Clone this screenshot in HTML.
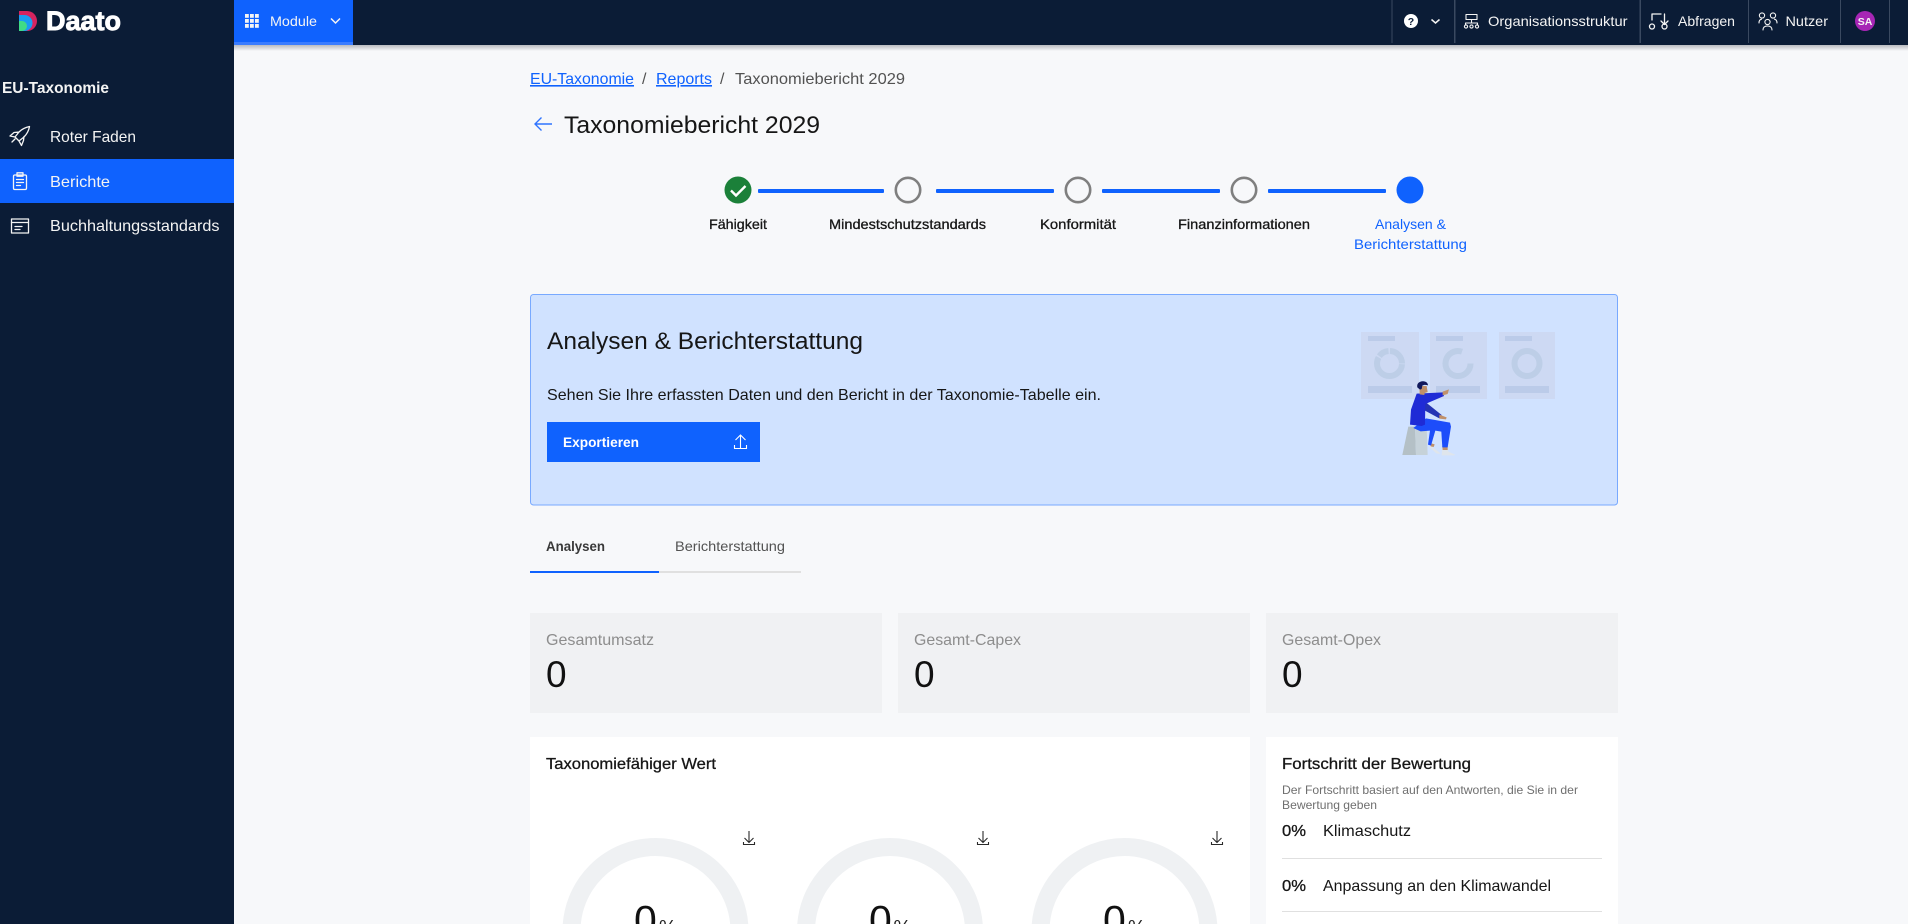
<!DOCTYPE html>
<html lang="de"><head><meta charset="utf-8"><title>Taxonomiebericht 2029</title>
<style>
html,body{margin:0;padding:0;width:1908px;height:924px;overflow:hidden;background:#f7f8fa}
svg{display:block}
text{font-family:"Liberation Sans",sans-serif;font-size:16px;fill:#161616}
.w{fill:#f4f4f4}.b{font-weight:700}.m{stroke:#161616;stroke-width:.3px}
.ic{fill:none;stroke:#f4f4f4;stroke-width:1.3;stroke-linecap:round;stroke-linejoin:round}
</style></head><body>
<svg width="1908" height="924" viewBox="0 0 1908 924" xmlns="http://www.w3.org/2000/svg">
<defs><linearGradient id="sh" x1="0" y1="0" x2="0" y2="1"><stop offset="0" stop-color="#b9bbc0"/><stop offset="1" stop-color="#f7f8fa"/></linearGradient></defs>
<rect width="1908" height="924" fill="#f7f8fa"/>
<rect x="234" y="45" width="1674" height="6" fill="url(#sh)"/>
<rect width="1908" height="45" fill="#0b1c36"/>
<rect y="45" width="234" height="879" fill="#0b1c36"/>

<!-- logo -->
<path d="M19 11H27A10 10 0 0 1 27 31H19Z" fill="#d6245f"/>
<path d="M19 15H24.500A8 8 0 0 1 32.500 23A8 8 0 0 1 24.500 31H19Z" fill="#1a9df0"/>
<path d="M19 21H22A5 5 0 0 1 27 26A5 5 0 0 1 22 31H19Z" fill="#3fdc86"/>
<text x="46" y="30" class="b" style="font-size:27px;fill:#fff;stroke:#fff;stroke-width:.9" textLength="75" lengthAdjust="spacing">Daato</text>

<!-- module -->
<rect x="234" y="0" width="119" height="45" fill="#0f62fe"/>
<rect x="234" y="42" width="119" height="3" fill="#3a7cff"/>
<g fill="#f4f4f4"><rect x="245" y="14" width="3.800" height="3.800"/><rect x="250" y="14" width="3.800" height="3.800"/><rect x="255" y="14" width="3.800" height="3.800"/><rect x="245" y="19" width="3.800" height="3.800"/><rect x="250" y="19" width="3.800" height="3.800"/><rect x="255" y="19" width="3.800" height="3.800"/><rect x="245" y="24" width="3.800" height="3.800"/><rect x="250" y="24" width="3.800" height="3.800"/><rect x="255" y="24" width="3.800" height="3.800"/></g>
<text x="270" y="26" class="w" style="font-size:14px" textLength="47" lengthAdjust="spacingAndGlyphs">Module</text>
<path d="M331 18.500l4.500 4.500 4.500-4.500" fill="none" stroke="#f4f4f4" stroke-width="1.500"/>

<!-- top right -->
<g fill="#3a4960"><rect x="1391.500" y="0" width="1" height="43"/><rect x="1454" y="0" width="1.500" height="43"/><rect x="1639.500" y="0" width="1.500" height="43"/><rect x="1748" y="0" width="1" height="43"/><rect x="1840" y="0" width="1" height="43"/><rect x="1889" y="0" width="1" height="43"/></g>
<circle cx="1411" cy="21" r="7" fill="#fff"/>
<text x="1411" y="25" text-anchor="middle" class="b" style="font-size:10.500px;fill:#0b1c36">?</text>
<path d="M1431.500 19.500l4 3.500 4-3.500" fill="none" stroke="#f4f4f4" stroke-width="1.500"/>
<g class="ic" style="stroke-width:1.100"><rect x="1466" y="14.500" width="11" height="5"/><path d="M1471.500 19.500V23M1465.500 25V23H1477.500V25"/><circle cx="1466" cy="26.500" r="1.600"/><circle cx="1471.500" cy="26.500" r="1.600"/><circle cx="1477" cy="26.500" r="1.600"/></g>
<text x="1488" y="26" class="w" style="font-size:14px" textLength="139.500" lengthAdjust="spacingAndGlyphs">Organisationsstruktur</text>
<g class="ic"><path d="M1652 20V14H1661M1664.500 14V24M1661 21l3.500 3.500 3.500-3.500"/><circle cx="1652" cy="26.500" r="2.500"/><circle cx="1664.500" cy="26.500" r="2.500"/></g>
<text x="1678" y="26" class="w" style="font-size:14px" textLength="57" lengthAdjust="spacingAndGlyphs">Abfragen</text>
<g class="ic" style="stroke-width:1.100"><circle cx="1762" cy="15.500" r="2.600"/><circle cx="1773" cy="15.500" r="2.600"/><circle cx="1767.500" cy="22" r="2.600"/><path d="M1759 23c0-2.500 1-3.500 2.500-3.800M1777 23c0-2.500-1-3.500-2.500-3.800M1763 30c0-2.800 2-4 4.500-4s4.500 1.200 4.500 4"/></g>
<text x="1785.500" y="26" class="w" style="font-size:14px" textLength="42.500" lengthAdjust="spacingAndGlyphs">Nutzer</text>
<circle cx="1865" cy="21" r="10" fill="#a626b5"/>
<text x="1865" y="25" text-anchor="middle" class="b" style="font-size:10.500px;fill:#f4f4f4">SA</text>

<!-- sidebar -->
<text x="2" y="93" class="b w" textLength="107" lengthAdjust="spacingAndGlyphs">EU-Taxonomie</text>
<rect x="0" y="159" width="234" height="44" fill="#0f62fe"/>
<g class="ic"><path d="M15 137l4-5c3-3 6-4.500 10.500-5.500-.8 4.500-2.500 7.500-5.500 10.500l-5 4zM15 137l-5-1 4-3.500 5-.5M19 141l2.500 4.500 2-5 .5-4M12 142l3-3"/></g>
<g class="ic"><rect x="13.500" y="175" width="13" height="14.500" rx="1.200"/><rect x="17" y="172.800" width="6" height="3.400"/><path d="M16.500 179.500h7M16.500 182.500h7M16.500 185.500h4"/></g>
<g class="ic"><rect x="11.500" y="219" width="17" height="14"/><path d="M11.500 222.500h17M15 226.500h7M15 229.500h5"/></g>
<text x="50" y="142" class="w" textLength="86" lengthAdjust="spacingAndGlyphs">Roter Faden</text>
<text x="50" y="187" class="w" textLength="60" lengthAdjust="spacingAndGlyphs">Berichte</text>
<text x="50" y="231" class="w" textLength="169.500" lengthAdjust="spacingAndGlyphs">Buchhaltungsstandards</text>

<!-- breadcrumb -->
<text x="530" y="84" style="fill:#0f62fe" text-decoration="underline" textLength="104" lengthAdjust="spacingAndGlyphs">EU-Taxonomie</text>
<text x="642" y="84" style="fill:#525252">/</text>
<text x="656" y="84" style="fill:#0f62fe" text-decoration="underline" textLength="56" lengthAdjust="spacingAndGlyphs">Reports</text>
<text x="720" y="84" style="fill:#525252">/</text>
<text x="735" y="84" style="fill:#525252" textLength="170" lengthAdjust="spacingAndGlyphs">Taxonomiebericht 2029</text>

<path d="M552 124H535M541.500 117.500l-6.500 6.500 6.500 6.500" fill="none" stroke="#2f74fe" stroke-width="1.400"/>
<text x="564" y="133" style="font-size:24px" textLength="256" lengthAdjust="spacingAndGlyphs">Taxonomiebericht 2029</text>

<!-- stepper -->
<g fill="#0f62fe"><rect x="758" y="189" width="126" height="4" rx="1"/><rect x="936" y="189" width="118" height="4" rx="1"/><rect x="1102" y="189" width="118" height="4" rx="1"/><rect x="1268" y="189" width="118" height="4" rx="1"/></g>
<circle cx="738" cy="190" r="13.500" fill="#1b8039"/>
<path d="M731 190.500l5 5 9.500-9.500" fill="none" stroke="#fff" stroke-width="2.400"/>
<g fill="none" stroke="#7f7f7f" stroke-width="2.600"><circle cx="908" cy="190" r="12.200"/><circle cx="1078" cy="190" r="12.200"/><circle cx="1244" cy="190" r="12.200"/></g>
<circle cx="1410" cy="190" r="13.500" fill="#0f62fe"/>
<text x="709" y="229" class="m" style="font-size:14px" textLength="58" lengthAdjust="spacingAndGlyphs">Fähigkeit</text>
<text x="829" y="229" class="m" style="font-size:14px" textLength="157" lengthAdjust="spacingAndGlyphs">Mindestschutzstandards</text>
<text x="1040" y="229" class="m" style="font-size:14px" textLength="76" lengthAdjust="spacingAndGlyphs">Konformität</text>
<text x="1178" y="229" class="m" style="font-size:14px" textLength="132" lengthAdjust="spacingAndGlyphs">Finanzinformationen</text>
<text x="1375" y="229" style="font-size:14px;fill:#0f62fe" textLength="71" lengthAdjust="spacingAndGlyphs">Analysen &amp;</text>
<text x="1354" y="249" style="font-size:14px;fill:#0f62fe" textLength="113" lengthAdjust="spacingAndGlyphs">Berichterstattung</text>

<!-- banner -->
<rect x="530.500" y="294.500" width="1087" height="210.500" rx="3" fill="#d0e2ff" stroke="#78a9ff"/>
<text x="547" y="349" style="font-size:24px" textLength="316" lengthAdjust="spacingAndGlyphs">Analysen &amp; Berichterstattung</text>
<text x="547" y="400" textLength="554" lengthAdjust="spacingAndGlyphs">Sehen Sie Ihre erfassten Daten und den Bericht in der Taxonomie-Tabelle ein.</text>
<rect x="547" y="422" width="213" height="40" fill="#0f62fe"/>
<text x="563" y="447" class="b" style="font-size:14px;fill:#fff" textLength="76" lengthAdjust="spacingAndGlyphs">Exportieren</text>
<path d="M740.500 448V435M735.500 440l5-5 5 5M734.500 445v3.500h12v-3.500" fill="none" stroke="#fff" stroke-width="1.100"/>

<!-- illustration -->
<g fill="#cdd9f3"><rect x="1361" y="332" width="58" height="67"/><rect x="1430" y="332" width="57" height="67"/><rect x="1499" y="332" width="56" height="67"/></g>
<g fill="#bbcbe9"><rect x="1368" y="336" width="27" height="5"/><rect x="1368" y="386" width="44" height="7"/><rect x="1436" y="336" width="27" height="5"/><rect x="1436" y="386" width="44" height="7"/><rect x="1505" y="336" width="27" height="5"/><rect x="1505" y="386" width="44" height="7"/></g>
<g fill="none" stroke="#bdcee7" stroke-width="6"><circle cx="1389.500" cy="363.500" r="12.500" stroke-dasharray="0 .7 44.600 1.500 10.700 1.500 19.500"/><path d="M1470.500 363.500A12.500 12.500 0 1 1 1462 351.700"/><circle cx="1527" cy="363.500" r="12.500"/></g>
<g transform="translate(1320 310) scale(.3333)">
<path d="M265 350H285L288 435H247Z" fill="#b4c0c6"/><path d="M285 350H320L323 435H288Z" fill="#c6d2d9"/>
<path d="M330 405l28 22 3 5-12-2-22-20zM367 412h16l2 13 20 9-2 2h-38z" fill="#dfe5ec"/>
<path d="M334 400l10 3-3 8-9-2zM367 408h16v12h-15z" fill="#c0906a"/>
<path d="M315 275L365 315 358 325 315 302Z" fill="#2433b4"/>
<path d="M358 314l22 8-2 6-20-2z" fill="#c0906a"/>
<path d="M318 325l72 13 3 12-10 62h-16l-3-47-18-3-13 45-9-3 6-42-28 2-22-10z" fill="#1d4dfa"/>
<path d="M290 251l80-4 2 11-56 24-1 62-10 4-35-4 3-45z" fill="#1f2bd6"/>
<path d="M368 245l19-7-2 7-2 7-15 4z" fill="#c0906a"/>
<path d="M298 228h22l3 18-9 3-1 6-14-2z" fill="#c0906a"/>
<path d="M292 232c-3-14 10-19 20-18 8 1 12 6 12 12-7-2-13-2-17 1l-2 10-5 2z" fill="#11195c"/>
</g>

<!-- tabs -->
<text x="546" y="551" class="b" style="font-size:14px;fill:#393939" textLength="59" lengthAdjust="spacingAndGlyphs">Analysen</text>
<text x="675" y="551" style="font-size:14px;fill:#525252" textLength="110" lengthAdjust="spacingAndGlyphs">Berichterstattung</text>
<rect x="530" y="571" width="271" height="2" fill="#e0e0e0"/><rect x="530" y="571" width="129" height="2" fill="#0f62fe"/>

<!-- stat cards -->
<g fill="#f0f1f3"><rect x="530" y="613" width="352" height="100"/><rect x="898" y="613" width="352" height="100"/><rect x="1266" y="613" width="352" height="100"/></g>
<text x="546" y="645" style="fill:#8d8d8d" textLength="108" lengthAdjust="spacingAndGlyphs">Gesamtumsatz</text>
<text x="914" y="645" style="fill:#8d8d8d" textLength="107" lengthAdjust="spacingAndGlyphs">Gesamt-Capex</text>
<text x="1282" y="645" style="fill:#8d8d8d" textLength="99" lengthAdjust="spacingAndGlyphs">Gesamt-Opex</text>
<text x="546" y="687" style="font-size:37px;fill:#111">0</text>
<text x="914" y="687" style="font-size:37px;fill:#111">0</text>
<text x="1282" y="687" style="font-size:37px;fill:#111">0</text>

<!-- panels -->
<rect x="530" y="737" width="720" height="187" fill="#fff"/>
<rect x="1266" y="737" width="352" height="187" fill="#fff"/>
<text x="546" y="769" class="m" textLength="170" lengthAdjust="spacingAndGlyphs">Taxonomiefähiger Wert</text>
<g fill="none" stroke="#eff1f3" stroke-width="18"><circle cx="655.500" cy="931" r="84"/><circle cx="890" cy="931" r="84"/><circle cx="1124.500" cy="931" r="84"/></g>
<g fill="none" stroke="#2a2a2a" stroke-width="1.100"><path d="M749 831V842M744.500 838l4.500 4.500 4.500-4.500M743.500 842v2.500h11V842"/><path d="M983 831V842M978.500 838l4.500 4.500 4.500-4.500M977.500 842v2.500h11V842"/><path d="M1217 831V842M1212.500 838l4.500 4.500 4.500-4.500M1211.500 842v2.500h11V842"/></g>
<text x="634" y="934" style="font-size:41px;fill:#111">0</text><text x="869" y="934" style="font-size:41px;fill:#111">0</text><text x="1103" y="934" style="font-size:41px;fill:#111">0</text>
<text x="659" y="934" style="font-size:20px;fill:#222">%</text><text x="893.500" y="934" style="font-size:20px;fill:#222">%</text><text x="1128" y="934" style="font-size:20px;fill:#222">%</text>

<text x="1282" y="769" class="m" textLength="189" lengthAdjust="spacingAndGlyphs">Fortschritt der Bewertung</text>
<text x="1282" y="794" style="font-size:12px;fill:#6f6f6f" textLength="296" lengthAdjust="spacingAndGlyphs">Der Fortschritt basiert auf den Antworten, die Sie in der</text>
<text x="1282" y="809" style="font-size:12px;fill:#6f6f6f" textLength="95" lengthAdjust="spacingAndGlyphs">Bewertung geben</text>
<text x="1282" y="836" class="m" textLength="24" lengthAdjust="spacingAndGlyphs">0%</text>
<text x="1323" y="836" textLength="88" lengthAdjust="spacingAndGlyphs">Klimaschutz</text>
<rect x="1282" y="858" width="320" height="1" fill="#e0e0e0"/>
<text x="1282" y="891" class="m" textLength="24" lengthAdjust="spacingAndGlyphs">0%</text>
<text x="1323" y="891" textLength="228" lengthAdjust="spacingAndGlyphs">Anpassung an den Klimawandel</text>
<rect x="1282" y="911" width="320" height="1" fill="#e0e0e0"/>
</svg>
</body></html>
